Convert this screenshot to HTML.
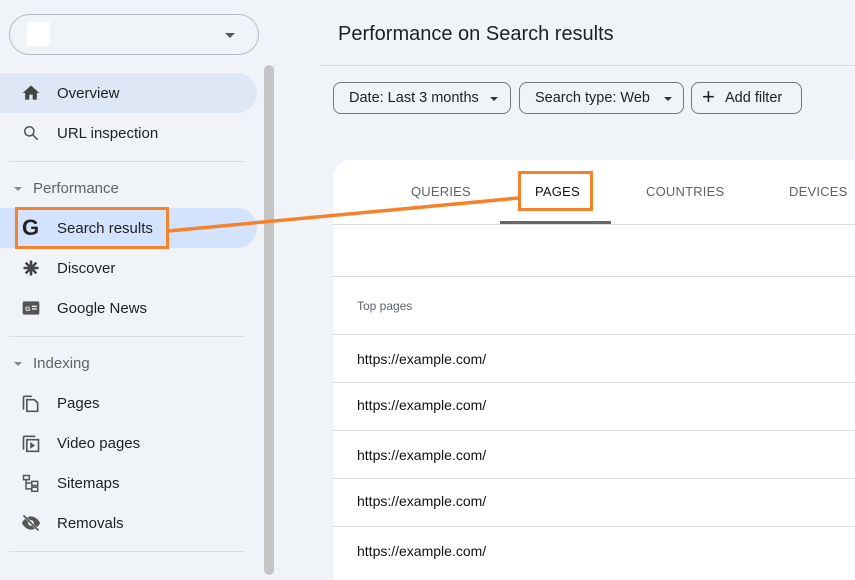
<!DOCTYPE html>
<html><head><meta charset="utf-8"><style>
*{box-sizing:border-box;margin:0;padding:0}
body{width:855px;height:569px;overflow:hidden;background:#f0f4f9;font-family:"Liberation Sans",sans-serif;position:relative;color:#1f1f1f}
.a{position:absolute}
.prop{left:9px;top:14px;width:250px;height:41px;border:1px solid #b8bcc2;border-radius:21px}
.prop .sq{position:absolute;left:17px;top:7px;width:23px;height:24px;background:#fff;border-radius:2px}
.caret{width:0;height:0;border-left:5px solid transparent;border-right:5px solid transparent;border-top:5px solid #444}
.nav{left:0;width:257px;height:40px;border-radius:0 20px 20px 0}
.lbl{font-size:15px;color:#1f1f1f;left:57px}
.sec{font-size:15px;color:#5f6368;left:33px}
.ico{left:21px;width:20px;height:20px}
.hr{height:1px;background:#dadce0}
.btn{top:82px;height:32px;border:1px solid #74777c;border-radius:8px;font-size:14.5px;color:#1f1f1f;line-height:30px;padding-left:15px}
.tab{top:184px;font-size:13px;color:#5f6368;letter-spacing:.2px}
.url{left:357px;font-size:14px;color:#111}
</style></head><body>
<div class="a prop"><div class="sq"></div><div class="caret a" style="left:215px;top:18px;border-top-color:#555"></div></div>

<div class="a nav" style="top:73px;background:#dde7f6"></div>
<div class="a nav" style="top:208px;background:#d3e3fd"></div>

<svg class="a ico" style="top:83px" viewBox="0 0 24 24"><path d="M10 20v-6h4v6h5v-8h3L12 3 2 12h3v8z" fill="#444"/></svg>
<div class="a lbl" style="top:85px">Overview</div>
<svg class="a ico" style="top:123px" viewBox="0 0 24 24"><circle cx="10" cy="10" r="5.5" fill="none" stroke="#555" stroke-width="1.8"/><path d="M14 14l6 6" stroke="#555" stroke-width="1.8"/></svg>
<div class="a lbl" style="top:125px">URL inspection</div>
<div class="a hr" style="left:9px;top:161px;width:236px"></div>
<div class="a caret" style="left:14px;top:187px;border-top-color:#888;border-width:4px 4px 0"></div>
<div class="a sec" style="top:180px">Performance</div>
<div class="a" style="left:22px;top:215px;font-size:22px;font-weight:bold;color:#222">G</div>
<div class="a lbl" style="top:220px">Search results</div>
<svg class="a ico" style="top:258px" viewBox="0 0 24 24"><path d="M12 3v18M3 12h18M5.6 5.6l12.8 12.8M18.4 5.6L5.6 18.4" stroke="#444" stroke-width="3"/></svg>
<div class="a lbl" style="top:260px">Discover</div>
<svg class="a ico" style="top:298px" viewBox="0 0 24 24"><rect x="2" y="4" width="20" height="16" rx="2" fill="#555"/><text x="5" y="15.5" font-size="8" fill="#fff" font-family="Liberation Sans" font-weight="bold">G</text><path d="M13 10h6M13 13h6" stroke="#fff" stroke-width="1.5"/></svg>
<div class="a lbl" style="top:300px">Google News</div>
<div class="a hr" style="left:9px;top:336px;width:236px"></div>
<div class="a caret" style="left:14px;top:362px;border-top-color:#888;border-width:4px 4px 0"></div>
<div class="a sec" style="top:355px">Indexing</div>
<svg class="a ico" style="top:393px" viewBox="0 0 24 24" fill="none" stroke="#555" stroke-width="2"><path d="M3 4v16M3 4h10M7 8h9l4 4v10H7z"/></svg>
<div class="a lbl" style="top:395px">Pages</div>
<svg class="a ico" style="top:433px" viewBox="0 0 24 24" fill="none" stroke="#555" stroke-width="2"><path d="M3 4v16M3 4h14M7 8h14v14H7z"/><path d="M11 11v8l6-4z" fill="#555" stroke="none"/></svg>
<div class="a lbl" style="top:435px">Video pages</div>
<svg class="a ico" style="top:473px" viewBox="0 0 24 24" fill="none" stroke="#555" stroke-width="1.8"><rect x="3" y="3" width="7" height="5"/><rect x="13" y="10" width="7" height="5"/><rect x="13" y="17" width="7" height="5"/><path d="M6 8v11h7M6 12h7"/></svg>
<div class="a lbl" style="top:475px">Sitemaps</div>
<svg class="a ico" style="top:513px" viewBox="0 0 24 24"><path d="M1 12c3-6 8-8 11-8s8 2 11 8c-3 6-8 8-11 8S4 18 1 12z" fill="#555"/><circle cx="12" cy="12" r="3.5" fill="#f0f4f9"/><path d="M3 3l18 18" stroke="#f0f4f9" stroke-width="3"/><path d="M3 3l18 18" stroke="#555" stroke-width="2"/></svg>
<div class="a lbl" style="top:515px">Removals</div>
<div class="a hr" style="left:9px;top:551px;width:236px"></div>

<div class="a" style="left:264px;top:65px;width:10px;height:510px;background:#c4c4c4;border-radius:5px"></div>

<div class="a" style="left:338px;top:23px;font-size:20px;color:#1f1f1f">Performance on Search results</div>
<div class="a hr" style="left:320px;top:65px;width:535px"></div>

<div class="a btn" style="left:333px;width:178px">Date: Last 3 months<div class="caret a" style="left:156px;top:14px;border-width:4px 4px 0;border-top-color:#333"></div></div>
<div class="a btn" style="left:519px;width:165px">Search type: Web<div class="caret a" style="left:144px;top:14px;border-width:4px 4px 0;border-top-color:#333"></div></div>
<div class="a btn" style="left:691px;width:111px;padding-left:33px">Add filter<div class="a" style="left:10px;top:-1px;font-size:22px;font-weight:300">+</div></div>

<div class="a" style="left:333px;top:160px;width:530px;height:420px;background:#fff;border-radius:18px 0 0 0"></div>
<div class="a tab" style="left:411px">QUERIES</div>
<div class="a tab" style="left:535px;color:#111">PAGES</div>
<div class="a tab" style="left:646px">COUNTRIES</div>
<div class="a tab" style="left:789px">DEVICES</div>
<div class="a hr" style="left:333px;top:224px;width:522px"></div>
<div class="a" style="left:500px;top:221px;width:111px;height:3px;background:#666"></div>

<div class="a hr" style="left:333px;top:276px;width:522px"></div>
<div class="a" style="left:357px;top:299px;font-size:12px;color:#5f6368">Top pages</div>
<div class="a hr" style="left:333px;top:334px;width:522px"></div>
<div class="a url" style="top:351px">https://example.com/</div>
<div class="a hr" style="left:333px;top:382px;width:522px"></div>
<div class="a url" style="top:397px">https://example.com/</div>
<div class="a hr" style="left:333px;top:430px;width:522px"></div>
<div class="a url" style="top:447px">https://example.com/</div>
<div class="a hr" style="left:333px;top:478px;width:522px"></div>
<div class="a url" style="top:493px">https://example.com/</div>
<div class="a hr" style="left:333px;top:526px;width:522px"></div>
<div class="a url" style="top:543px">https://example.com/</div>

<div class="a" style="left:15px;top:207px;width:154px;height:42px;border:3.5px solid #f5822a"></div>
<div class="a" style="left:518px;top:171px;width:75px;height:40px;border:3.5px solid #f5822a"></div>
<svg class="a" style="left:0;top:0" width="855" height="569"><line x1="168" y1="231" x2="519" y2="198" stroke="#f5822a" stroke-width="3.5"/></svg>
</body></html>
